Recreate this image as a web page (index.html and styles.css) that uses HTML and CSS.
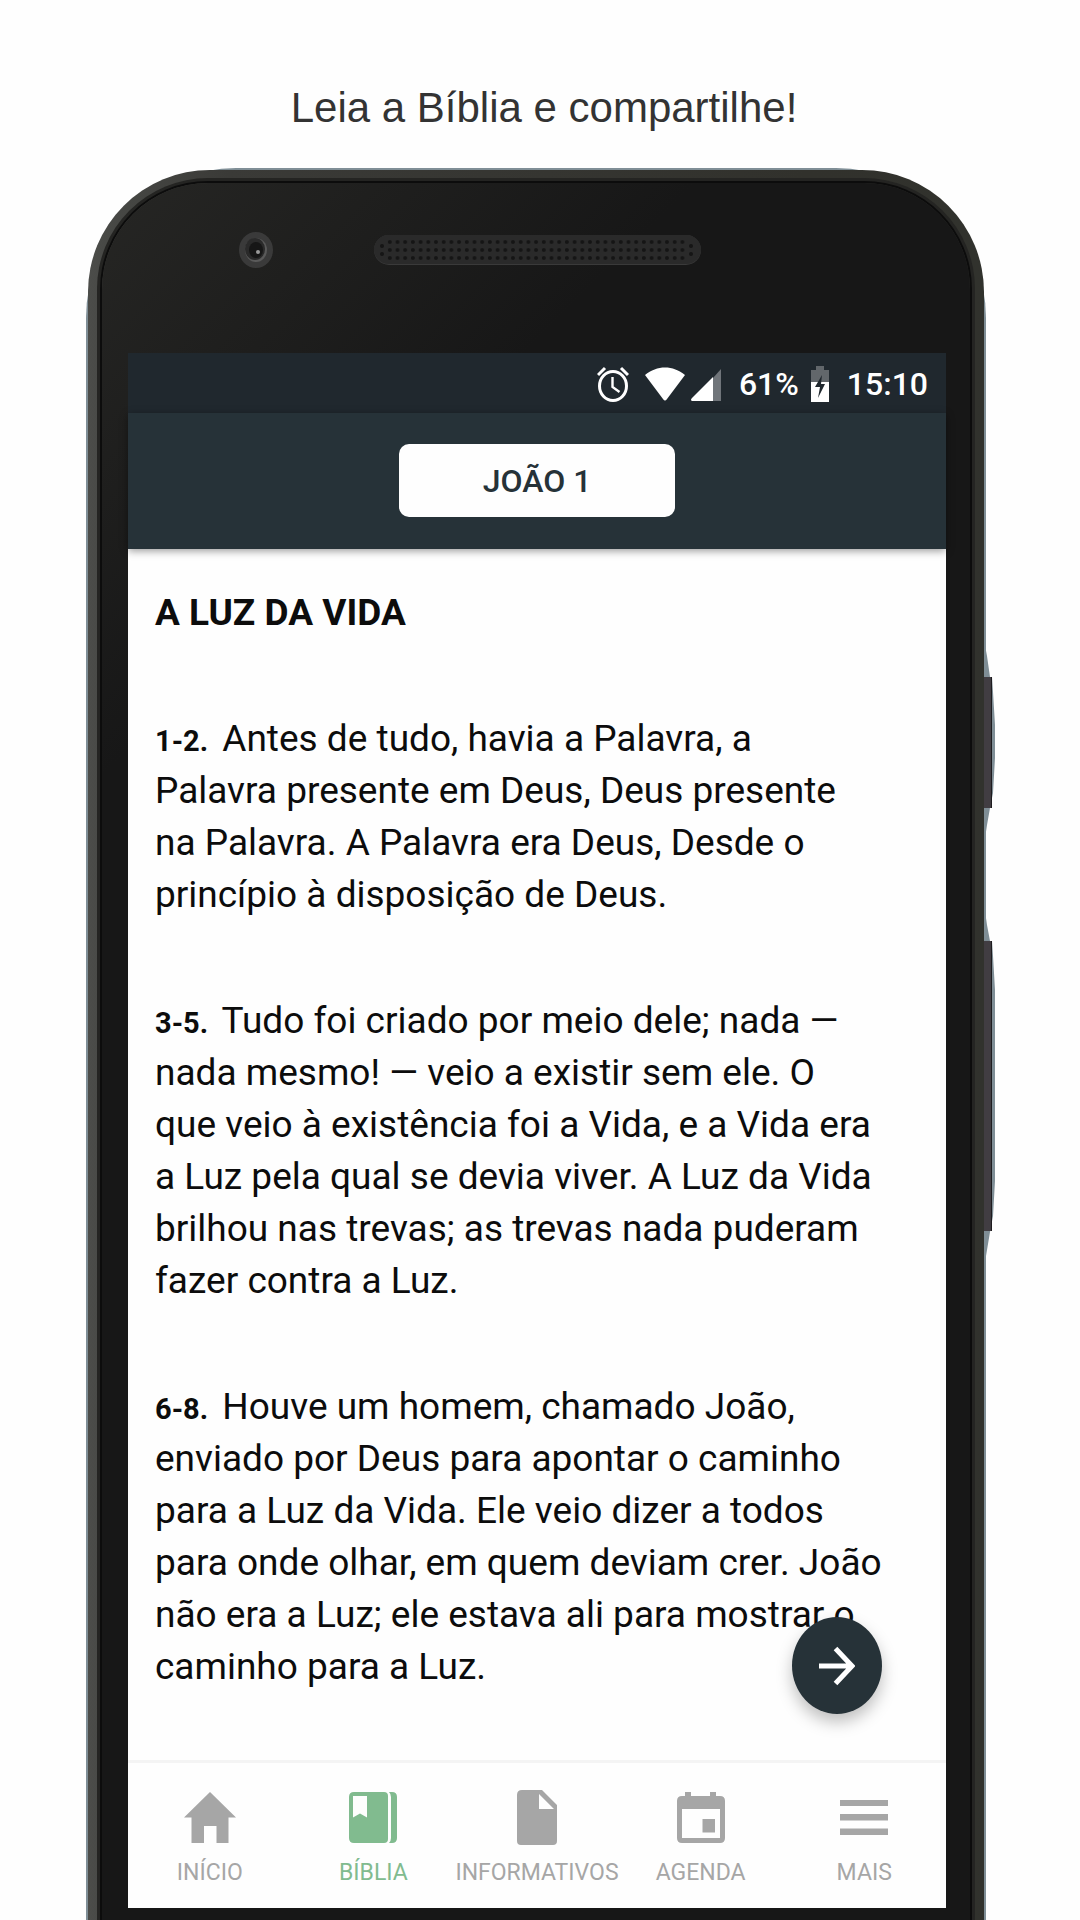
FILE: index.html
```html
<!DOCTYPE html>
<html lang="pt-BR">
<head>
<meta charset="utf-8">
<meta name="viewport" content="width=device-width, initial-scale=1">
<title>Leia a Bíblia e compartilhe!</title>
<link rel="stylesheet" href="styles.css">
</head>
<body>
<main class="promo">
  <h1 class="caption">Leia a Bíblia e compartilhe!</h1>

  <div class="phone">
    <svg class="side-keys" width="13" height="640" viewBox="0 0 13 640" aria-hidden="true">
      <path fill="#7f8e96" d="M0 10 3 26 6 47H8L9 62 11 95V128L9 163 6 178 3 195 0 215zM0 274 3 295 6 311H8L9 326 11 360V551L9 586 6 602 3 620 0 638z"/>
      <path fill="#413d42" d="M0 47h8v131H0zM0 311h8v290H0z"/>
      <path fill="#1e1c1f" d="M7 47h1v131H7zM7 311h1v290H7z"/>
    </svg>
    <div class="metal">
      <div class="bezel">
        <div class="sensors">
          <svg class="camera" width="34" height="36" viewBox="0 0 34 36" aria-hidden="true">
            <ellipse cx="17" cy="18" rx="17" ry="18" fill="#3a3a3a"/>
            <ellipse cx="17" cy="18" rx="11" ry="12" fill="#5a5a5a"/>
            <ellipse cx="16" cy="17" rx="10" ry="11" fill="#2a2a2a"/>
            <ellipse cx="17" cy="18" rx="7" ry="8" fill="#161616"/>
            <circle cx="19" cy="20" r="2" fill="#9a9a9a"/>
          </svg>
          <svg class="speaker" width="327" height="30" viewBox="0 0 327 30" aria-hidden="true">
            <defs>
              <pattern id="holes" x="12" y="3" width="7.7" height="8" patternUnits="userSpaceOnUse">
                <circle cx="3.8" cy="4" r="2" fill="#151515"/>
              </pattern>
            </defs>
            <rect width="327" height="30" rx="15" fill="#3a3a3a"/>
            <rect width="327" height="29" rx="14.5" fill="#2a2a2a"/>
            <rect x="12" y="3" width="300.3" height="24" fill="url(#holes)"/>
            <g fill="#151515"><circle cx="8" cy="11" r="2"/><circle cx="8" cy="19" r="2"/><circle cx="317" cy="11" r="2"/><circle cx="317" cy="19" r="2"/></g>
          </svg>
        </div>

        <div class="screen">
          <div class="status">
            <svg class="alarm" width="32" height="36" viewBox="0 0 32 36" fill="none" stroke="#fff" aria-hidden="true">
              <ellipse cx="16" cy="20" rx="13.5" ry="14.5" stroke-width="3"/>
              <path stroke-width="3" d="M1 9 8 2M31 9 24 2"/>
              <path stroke-width="2.4" d="M15.5 11V21L22.5 26"/>
            </svg>
            <svg class="wifi" width="40" height="36" viewBox="0 0 40 36" aria-hidden="true">
              <path fill="#fff" d="M0 9C12-1 28-1 40 9L22 33Q20 36 18 33z"/>
            </svg>
            <svg class="signal" width="30" height="36" viewBox="0 0 30 36" aria-hidden="true">
              <path fill="#70757a" d="M30 3V35H22V12z"/>
              <path fill="#fff" d="M22 11V35H1Q-1 34 1 32z"/>
            </svg>
            <span class="charge">61%</span>
            <svg class="battery" width="18" height="36" viewBox="0 0 18 36" aria-hidden="true">
              <path fill="#62676b" d="M5 0h8v4h5v12H0V4h5z"/>
              <path fill="#fff" d="M0 16h18v20H0z"/>
              <path fill="#20282e" d="M11 9 4 21h5L7 32 14 18H10z"/>
            </svg>
            <time class="clock">15:10</time>
          </div>

          <header class="toolbar">
            <button class="chapter" type="button">JOÃO 1</button>
          </header>

          <div class="reader">
            <article class="text">
              <h2 class="title">A LUZ DA VIDA</h2>
              <p class="verse"><b class="num">1-2.</b> Antes de tudo, havia a Palavra, a<br>
                Palavra presente em Deus, Deus presente<br>
                na Palavra. A Palavra era Deus, Desde o<br>
                princípio à disposição de Deus.</p>
              <p class="verse"><b class="num">3-5.</b> Tudo foi criado por meio dele; nada —<br>
                nada mesmo! — veio a existir sem ele. O<br>
                que veio à existência foi a Vida, e a Vida era<br>
                a Luz pela qual se devia viver. A Luz da Vida<br>
                brilhou nas trevas; as trevas nada puderam<br>
                fazer contra a Luz.</p>
              <p class="verse"><b class="num">6-8.</b> Houve um homem, chamado João,<br>
                enviado por Deus para apontar o caminho<br>
                para a Luz da Vida. Ele veio dizer a todos<br>
                para onde olhar, em quem deviam crer. João<br>
                não era a Luz; ele estava ali para mostrar o<br>
                caminho para a Luz.</p>
            </article>
            <button class="next" type="button" aria-label="Próximo capítulo">
              <svg width="36" height="40" viewBox="0 0 36 40" fill="none" stroke="#fff" stroke-width="5" aria-hidden="true">
                <path d="M0 20H33M16.500 2.500 33 20 16.500 37.500"/>
              </svg>
            </button>
          </div>

          <nav class="tabs">
            <a class="tab" href="#inicio">
              <svg width="56" height="56" viewBox="0 0 56 56" fill="currentColor" aria-hidden="true"><path d="M28 3 54 28.500H46.500V54H34.500V37H22V54H9.500V28.500H2z"/></svg>
              <span>INÍCIO</span>
            </a>
            <a class="tab active" href="#biblia" aria-current="page">
              <svg width="56" height="56" viewBox="0 0 56 56" fill="currentColor" aria-hidden="true">
                <path fill-rule="evenodd" d="M9 3H39Q43 3 43 7V50Q43 54 39 54H9Q4 54 4 49V8Q4 3 9 3zM8 7V28.500L15 24.500 22 28.500V7z"/>
                <path d="M44 3H47Q52 3 52 8V49Q52 54 47 54H44Q46 52 46 49V8Q46 5 44 3z"/>
              </svg>
              <span>BÍBLIA</span>
            </a>
            <a class="tab" href="#informativos">
              <svg width="56" height="56" viewBox="0 0 56 56" fill="currentColor" aria-hidden="true"><path fill-rule="evenodd" d="M13 1H33L48 16V52Q48 56 44 56H12Q8 56 8 52V6Q8 1 13 1zM30 5V20H45z"/></svg>
              <span>INFORMATIVOS</span>
            </a>
            <a class="tab" href="#agenda">
              <svg width="56" height="56" viewBox="0 0 56 56" fill="currentColor" aria-hidden="true"><path fill-rule="evenodd" d="M12 3H18V7H37V3H43V7H47Q52 7 52 12V49Q52 54 47 54H9Q4 54 4 49V12Q4 7 9 7H12zM9 20V49H47V20zM29.500 30H42V43.500H29.500z"/></svg>
              <span>AGENDA</span>
            </a>
            <a class="tab" href="#mais">
              <svg width="56" height="56" viewBox="0 0 56 56" fill="currentColor" aria-hidden="true"><path d="M4 11H52V17H4zM4 25H52V31.500H4zM4 39.500H52V46H4z"/></svg>
              <span>MAIS</span>
            </a>
          </nav>
        </div>
      </div>
    </div>
  </div>
</main>
</body>
</html>
```
FILE: styles.css
```css
* {
  box-sizing: border-box;
}

body {
  margin: 0;
  background: #fefefe;
  font-family: Roboto, "Liberation Sans", sans-serif;
}

.promo {
  min-height: 100vh;
  display: flex;
  flex-direction: column;
}

.caption {
  margin: 0;
  padding: 82px 0 34px 8px;
  font: 400 42px/52px "Liberation Sans", Arial, sans-serif;
  color: #333;
  text-align: center;
}

/* Device frame */
.phone {
  position: relative;
  flex: 1;
  display: flex;
  margin: 0 94px 0 86px;
  padding: 2px 2px 0;
  background: #7f8e96;
  border-radius: 150px 150px 0 0;
}

.side-keys {
  position: absolute;
  top: 462px;
  left: calc(100% - 2px);
}

.metal {
  flex: 1;
  display: flex;
  padding: 13px 14px 0;
  border-radius: 122px 122px 0 0;
  background: linear-gradient(90deg, #4c4d4a 0, #484946 16px, #3a3a37 140px, #31312c 80%, #31322d 100%);
}

.bezel {
  flex: 1;
  display: flex;
  flex-direction: column;
  padding: 0 24px 12px 26px;
  border-radius: 106px 106px 0 0;
  background: linear-gradient(135deg, #262624 0, #171717 420px);
  box-shadow: 0 0 0 2px #0c0c0c, 0 0 0 5px #242422;
}

.sensors {
  display: flex;
  align-items: center;
  gap: 101px;
  padding: 49px 0 85px 111px;
}

/* App */
.screen {
  flex: 1;
  display: flex;
  flex-direction: column;
  background: #fefefe;
}

.status {
  display: flex;
  align-items: center;
  justify-content: flex-end;
  height: 60px;
  padding: 2px 18px 0 0;
  background: #20282e;
  color: #fff;
  font-size: 32px;
  font-weight: 500;
  line-height: 40px;
}

.wifi {
  margin-left: 16px;
}

.signal {
  margin-left: 6px;
}

.charge {
  margin-left: 18px;
}

.battery {
  margin-left: 12px;
}

.clock {
  margin-left: 18px;
}

.toolbar {
  position: relative;
  display: flex;
  justify-content: center;
  padding: 31px 0 32px;
  background: #263238;
  box-shadow: 0 2px 8px rgba(0, 0, 0, 0.4);
}

.chapter {
  width: 276px;
  height: 73px;
  padding: 0;
  border: 0;
  border-radius: 10px;
  background: #fefefe;
  color: #263238;
  font: 500 32px/40px Roboto, sans-serif;
}

.reader {
  position: relative;
  flex: 1;
}

.text {
  padding: 38px 27px 67px;
  color: #0c0c0c;
  font-size: 37px;
  line-height: 52px;
}

.title {
  margin: 0 0 74px;
  font-size: 37px;
  font-weight: 700;
}

.verse {
  margin: 0;
}

.verse + .verse {
  margin-top: 74px;
}

.num {
  margin-right: 5px;
  font-size: 29px;
  line-height: 1;
}

.next {
  position: absolute;
  right: 64px;
  bottom: 46px;
  display: grid;
  place-items: center;
  width: 90px;
  height: 97px;
  padding: 0;
  border: 0;
  border-radius: 50%;
  background: #263238;
  box-shadow: 0 8px 16px rgba(0, 0, 0, 0.25);
}

.tabs {
  display: grid;
  grid-template-columns: repeat(5, 1fr);
  padding: 26px 0 21px;
  border-top: 3px solid #f4f4f4;
}

.tab {
  display: flex;
  flex-direction: column;
  align-items: center;
  gap: 14px;
  color: #a6a6a6;
  font-size: 23px;
  line-height: 28px;
  text-decoration: none;
}

.active {
  color: #81bb8f;
}
```
